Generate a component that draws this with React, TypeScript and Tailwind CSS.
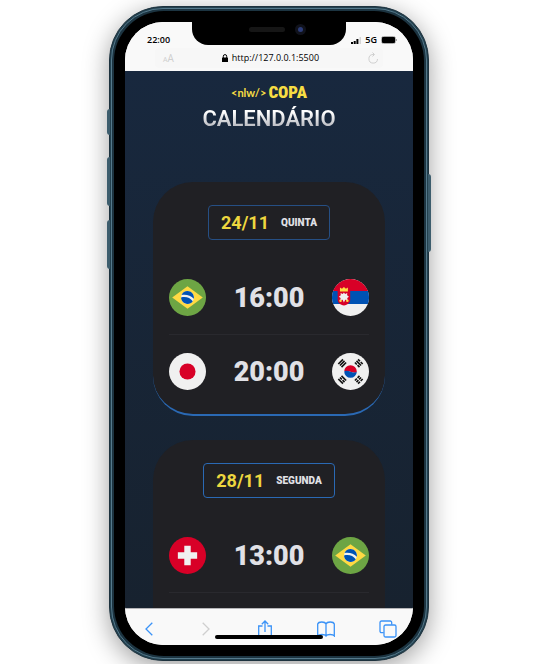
import type { ReactNode } from "react";

function Disc({ label, fill, children }: { label: string; fill: string; children?: ReactNode }) {
  return (
    <svg role="img" aria-label={label} viewBox="0 0 512 512" className="size-[37px] shrink-0">
      <circle cx="256" cy="256" r="256" fill={fill} />
      {children}
    </svg>
  );
}

function Brazil() {
  return (
    <Disc label="Brasil" fill="#6DA544">
      <path fill="#FFDA44" d="M256 100.174 467.478 256 256 411.826 44.522 256z" />
      <circle cx="256" cy="256" r="89" fill="#F0F0F0" />
      <path
        fill="#0052B4"
        d="M211.478 250.435c-15.484 0-30.427 2.355-44.493 6.725.623 48.64 40.227 87.884 89.015 87.884 30.168 0 56.812-15.017 72.919-37.968-27.557-34.497-69.958-56.641-117.441-56.641zM343.393 273.06c1.072-5.524 1.651-11.223 1.651-17.06 0-49.178-39.866-89.043-89.043-89.043-36.694 0-68.194 22.201-81.826 53.899 12.05-2.497 24.526-3.812 37.305-3.812 51.717 0 98.503 21.497 131.913 56.016z"
      />
    </Disc>
  );
}

function Serbia() {
  return (
    <Disc label="Sérvia" fill="#F0F0F0">
      <path fill="#0052B4" d="M16 167a256 256 0 0 0 0 178h480a256 256 0 0 0 0-178z" />
      <path fill="#D80027" d="M256 0C146 0 52 69 16 167h480C460 69 366 0 256 0z" />
      <path fill="#D80027" d="M78 160h174v126c0 42-38 70-87 80-49-10-87-38-87-80z" />
      <path fill="#FFDA44" d="M110 118l28 18 27-24 27 24 28-18v54H110z" />
      <circle cx="118" cy="300" r="18" fill="#FFDA44" />
      <circle cx="212" cy="300" r="18" fill="#FFDA44" />
      <path fill="#F0F0F0" d="M165 188l16 18 30-12-2 30 26 20-24 18 2 30-30-4-18 36-18-36-30 4 2-30-24-18 26-20-2-30 30 12z" />
    </Disc>
  );
}

function Japan() {
  return (
    <Disc label="Japão" fill="#F0F0F0">
      <circle cx="256" cy="256" r="111" fill="#D80027" />
    </Disc>
  );
}

function Trigram({ angle, broken }: { angle: number; broken: boolean[] }) {
  return (
    <g transform={`rotate(${angle} 256 256)`} fill="#111">
      {broken.map((split, i) =>
        split ? (
          <path key={i} d={`M${52 + i * 31} 211h22v38h-22zM${52 + i * 31} 263h22v38h-22z`} />
        ) : (
          <path key={i} d={`M${52 + i * 31} 211h22v90h-22z`} />
        ),
      )}
    </g>
  );
}

function Korea() {
  return (
    <Disc label="Coreia do Sul" fill="#F0F0F0">
      <Trigram angle={45} broken={[false, false, false]} />
      <Trigram angle={135} broken={[true, false, true]} />
      <Trigram angle={225} broken={[true, true, true]} />
      <Trigram angle={315} broken={[false, true, false]} />
      <path fill="#D80027" d="M169 256a87 87 0 0 1 174 0c0 24-58 20-87 4-29-16-87-16-87-4z" />
      <path fill="#0052B4" d="M343 256a87 87 0 0 1-174 0c12-14 58-12 87 4 29 14 78 12 87-4z" />
    </Disc>
  );
}

function Switzerland() {
  return (
    <Disc label="Suíça" fill="#D80027">
      <path fill="#F0F0F0" d="M389.565 211.479h-89.043v-89.044h-89.044v89.044h-89.043v89.043h89.043v89.043h89.044v-89.043h89.043z" />
    </Disc>
  );
}

function Game({ home, hour, away }: { home: ReactNode; hour: string; away: ReactNode }) {
  return (
    <li className="flex items-center justify-between border-b border-[#29292e] py-[18px] first:pt-0 last:border-b-0 last:pb-0">
      {home}
      <strong className="text-[27px] leading-9 font-black text-[#e1e1e6]">{hour}</strong>
      {away}
    </li>
  );
}

function Card({ date, day, tone, children }: { date: string; day: string; tone: string; children: ReactNode }) {
  return (
    <section className="flex flex-col items-center rounded-[40px] border-b-2 border-[#2a69b4] bg-[#202024] px-4 pt-[23px] pb-6">
      <h2 className={`flex h-[35px] items-center gap-3 rounded-[4px] border px-3 text-[18px] font-bold text-[#eed73f] ${tone}`}>
        {date}
        <span className="text-[10px] font-black text-[#e1e1e6]">{day}</span>
      </h2>
      <ul className="mt-[39px] w-full">{children}</ul>
    </section>
  );
}

function StatusBar() {
  return (
    <header className="h-[49px] shrink-0 bg-[#f9f9f9] pt-3 font-['Open_Sans',sans-serif] text-black">
      <div className="flex h-3 items-center justify-between pr-4 pl-[22px] text-[9px] leading-3 font-semibold">
        <time>22:00</time>
        <div className="flex items-center gap-1">
          <svg viewBox="0 0 10 7" className="h-[7px] w-[10px]" aria-label="Sinal">
            <path d="M0 5h2v2H0zM2.700 4h2v3h-2zM5.400 2h2v5h-2z" />
            <path d="M8.500 0H10v7H8.500z" fill="#d5d5d5" />
          </svg>
          <span>5G</span>
          <svg viewBox="0 0 16 8" className="h-2 w-4" aria-label="Bateria">
            <rect x=".5" y=".5" width="14" height="7" rx="2" fill="none" stroke="#aaa" />
            <rect x="1" y="1" width="13" height="6" rx="1" />
            <path d="M15 3h1v2h-1z" fill="#aaa" />
          </svg>
        </div>
      </div>
      <div className="mx-[30px] mt-[2px] flex h-5 items-center justify-between rounded bg-[#f7f7f7] px-1 text-[9px]">
        <button type="button" aria-label="Tamanho do texto" className="flex items-baseline pl-1 text-[#cfcfcf]">
          <span className="text-[7px]">A</span>
          <span className="text-[10px]">A</span>
        </button>
        <div className="flex items-center gap-1">
          <svg viewBox="0 0 6 8" className="h-2 w-[6px]" aria-hidden="true">
            <rect y="3.500" width="6" height="4.500" rx=".6" />
            <path d="M1.300 4V2.300a1.700 1.700 0 0 1 3.400 0V4" fill="none" stroke="#000" />
          </svg>
          <span>http://127.0.0.1:5500</span>
        </div>
        <button type="button" aria-label="Recarregar">
          <svg viewBox="0 0 12 12" className="size-3" fill="none" stroke="#cfcfcf">
            <path d="M7 2.500H6A4.300 4.300 0 1 0 10.500 7M5.500.5 7.500 2.500 5.500 4.500" />
          </svg>
        </button>
      </div>
    </header>
  );
}

function ToolBar() {
  return (
    <nav className="relative flex h-[37px] shrink-0 items-center justify-between border-t border-[#b5b5b8] bg-[#f9f9f9] px-4 pt-1 [&_svg]:fill-none [&_svg]:stroke-[#3b93f7] [&_svg]:stroke-[1.3]">
      <button type="button" aria-label="Voltar" className="pl-1">
        <svg viewBox="0 0 8 14" className="h-[14px] w-2"><path d="M7.300.7 1 7l6.300 6.300" /></svg>
      </button>
      <button type="button" aria-label="Avançar" className="pl-4">
        <svg viewBox="0 0 8 14" className="h-[14px] w-2"><path d="M.7.7 7 7 .7 13.300" stroke="#cfcfcf" /></svg>
      </button>
      <button type="button" aria-label="Compartilhar" className="pl-4">
        <svg viewBox="0 0 14 18" className="h-[18px] w-[14px]"><path d="M4.500 6H.7v11.300h12.600V6H9.500M7 12V1M3.800 4.200 7 1l3.200 3.200" /></svg>
      </button>
      <button type="button" aria-label="Favoritos" className="pl-3">
        <svg viewBox="0 0 18 16" className="h-4 w-[18px]"><path d="M9 3v12M9 3C8 .3 1.500.3.700 3v12C2 13 8 13 9 15c1-2 7-2 8.300 0V3C16.500.3 10 .3 9 3z" /></svg>
      </button>
      <button type="button" aria-label="Abas" className="pl-3">
        <svg viewBox="0 0 18 18" className="size-[18px]"><path d="M4.700 12.700H2.500a1.500 1.500 0 0 1-1.500-1.500V2.500A1.500 1.500 0 0 1 2.500 1h8.700a1.500 1.500 0 0 1 1.500 1.500v2.200" /><rect x="5" y="5" width="12" height="12" rx="1.500" /></svg>
      </button>
      <span className="absolute inset-x-[90px] bottom-[6px] h-1 rounded-full bg-black" />
    </nav>
  );
}

function Phone({ children }: { children: ReactNode }) {
  return (
    <div className="relative h-[655px] w-[320px] rounded-[54px] border border-[#1d323e] bg-[#23414f] p-px shadow-[0_6px_26px_rgba(0,0,0,0.38)]">
      <span className="absolute top-[102px] -left-[3px] h-[26px] w-[3px] rounded-l-sm bg-[#3d5d6d]" />
      <span className="absolute top-[150px] -left-[3px] h-[49px] w-[3px] rounded-l-sm bg-[#3d5d6d]" />
      <span className="absolute top-[213px] -left-[3px] h-[49px] w-[3px] rounded-l-sm bg-[#3d5d6d]" />
      <span className="absolute top-[167px] -right-[3px] h-[78px] w-[3px] rounded-r-sm bg-[#3d5d6d]" />
      <div className="h-full rounded-[52px] border border-[#55798b] bg-[#1c3441] p-[2px]">
        <div className="h-full rounded-[50px] bg-black p-[11px]">
          <div className="flex h-full flex-col overflow-hidden rounded-[38px] bg-[#f9f9f9]">{children}</div>
        </div>
      </div>
      <div className="absolute top-[14px] left-1/2 flex h-6 w-[154px] -translate-x-1/2 items-center justify-center gap-[10px] rounded-b-[16px] bg-black pb-2 pl-4">
        <span className="h-[5px] w-9 rounded-full bg-[#161616]" />
        <span className="flex size-[11px] items-center justify-center rounded-full bg-[#10121b]">
          <span className="size-[5px] rounded-full bg-[#2c3c78]" />
        </span>
      </div>
    </div>
  );
}

export default function App() {
  return (
    <div className="flex min-h-screen justify-center overflow-hidden bg-white pt-[6px] pl-[5px] font-['Roboto',sans-serif]">
      <Phone>
        <StatusBar />
        <main className="min-h-0 flex-1 overflow-hidden bg-linear-to-b from-[#18283e] to-[#17222f] px-7 pt-3">
          <div className="flex h-[18px] items-center justify-center gap-[2px] text-[#f7dd43]" aria-label="nlw copa">
            <span className="font-['Lato',sans-serif] text-[11px] leading-none font-bold">&lt;nlw/&gt;</span>
            <span className="font-['Liberation_Sans_Narrow','Roboto_Condensed','Liberation_Sans',sans-serif] text-[17px] leading-none font-black">COPA</span>
          </div>
          <h1 className="mt-1 bg-linear-to-b from-white from-25% to-[#b0b2b9] to-85% bg-clip-text text-center text-[22px] leading-7 font-semibold text-transparent">
            CALENDÁRIO
          </h1>
          <div className="mt-[49px] flex flex-col gap-6">
            <Card date="24/11" day="QUINTA" tone="border-[#264f84]">
              <Game home={<Brazil />} hour="16:00" away={<Serbia />} />
              <Game home={<Japan />} hour="20:00" away={<Korea />} />
            </Card>
            <Card date="28/11" day="SEGUNDA" tone="border-[#2a69b4]">
              <Game home={<Switzerland />} hour="13:00" away={<Brazil />} />
              <li className="h-14" />
            </Card>
          </div>
        </main>
        <ToolBar />
      </Phone>
    </div>
  );
}
